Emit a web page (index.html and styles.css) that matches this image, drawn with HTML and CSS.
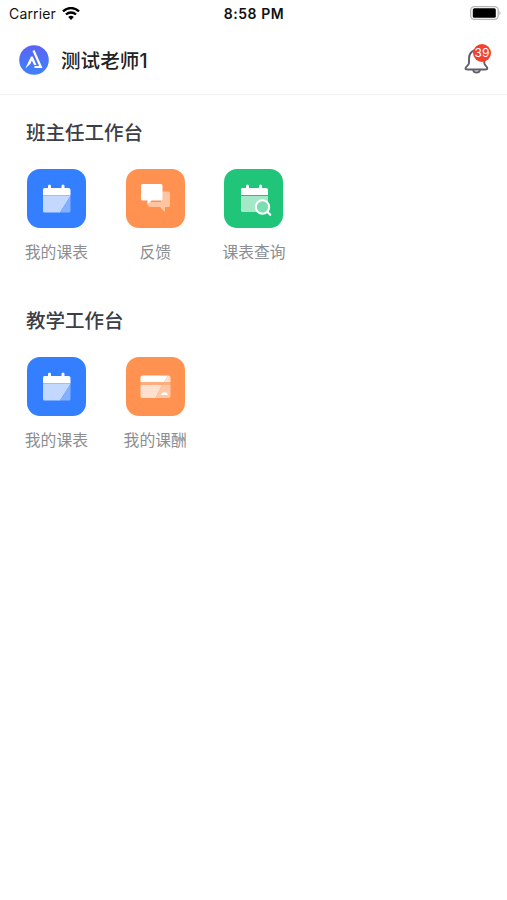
FILE: index.html
```html
<!DOCTYPE html>
<html lang="zh-CN">
<head>
<meta charset="utf-8">
<title>工作台</title>
<link rel="stylesheet" href="styles.css">
</head>
<body>
<svg class="defs" width="0" height="0">
  <symbol id="calendar" viewBox="0 0 59 59">
    <path class="white" d="M17.500 19H21v-2a1.500 1.500 0 0 1 3 0v2h10.500v-2a1.500 1.500 0 0 1 3 0v2h4q2 0 2 2v5.500H16V21q0-2 1.500-2z"/>
    <path class="tint" d="M16 27h27.500L33 43.500H17.500q-1.500 0-1.500-1.500z"/>
    <path class="faint" d="M43.500 27v15q0 1.500-1.500 1.500h-9z"/>
  </symbol>
</svg>
<div class="status">
  <div class="carrier">Carrier
    <svg width="18" height="14" viewBox="0 0 18 14"><g fill="none" stroke="#000" stroke-width="2.400"><path d="M1 4.300a11.500 11.500 0 0 1 16 0"/><path d="M4 7.500a7.200 7.200 0 0 1 10 0"/></g><path d="M6.200 10a4 4 0 0 1 5.600 0L9 13z"/></svg>
  </div>
  <div class="time">8:58 PM</div>
  <svg class="battery" width="32" height="14" viewBox="0 0 32 14"><rect x=".7" y=".7" width="27.500" height="12.600" rx="3.500" fill="#fff" stroke="#b5b5b5" stroke-width="1.300"/><rect x="2.800" y="2.300" width="23" height="9.400" rx="1.500"/><path d="M29.500 4.700q2 2.300 0 4.600z" fill="#aaa"/></svg>
</div>
<header class="header">
  <svg width="30" height="30" viewBox="0 0 30 30"><defs><linearGradient id="brand" x2="0" y2="1"><stop stop-color="#5b63f5"/><stop offset="1" stop-color="#3d83fa"/></linearGradient></defs><circle cx="15" cy="15" r="14.800" fill="url(#brand)"/><path d="M14.500 5.500L21.800 22H15.500" fill="none" stroke="#fff" stroke-width="2.200"/><path class="white" d="M6.300 23.500L12 11.500h1.700L17.500 20h-2.400l-2.300-4.500-1.300 3.200z"/></svg>
  <h1 class="name">测试老师1</h1>
  <div class="bell">
    <svg width="26" height="28" viewBox="0 0 26 28"><g fill="none" stroke="#5c606a" stroke-width="1.900" stroke-linecap="round" stroke-linejoin="round"><path d="M10 3.500C6 5 5 8 5 12v4c0 2.500-3.500 3.500-3.500 5.200 0 1 .8 1.300 2 1.300h17.800c1.200 0 2-.3 2-1.300 0-1.700-3-2.700-3-5.200v-3"/><path d="M9.300 23.300c.5 3 6 3 6.500 0"/></g></svg>
    <span class="badge">39</span>
  </div>
</header>
<main>
  <section class="section">
    <h2 class="title">班主任工作台</h2>
    <div class="apps">
      <div class="app"><svg class="tile blue" viewBox="0 0 59 59"><use href="#calendar"/></svg><span>我的课表</span></div>
      <div class="app"><svg class="tile orange" viewBox="0 0 59 59"><path d="M35 22.500h7q2 0 2 2v12q0 1.500-2 1.500h-3v5l-5-5H24q-2 0-2-1.500l2-3.500h11z" fill="#ffc4a0"/><path class="white" d="M16.500 15H35q1.500 0 1.500 1.500V30q0 1.500-1.500 1.500H25.500L21.500 36v-4.500h-5Q15 31.500 15 30V16.500Q15 15 16.500 15z"/></svg><span>反馈</span></div>
      <div class="app"><svg class="tile green" viewBox="0 0 59 59"><path class="white" d="M18 19h4v-2a1.500 1.500 0 0 1 3 0v2h10v-2a1.500 1.500 0 0 1 3 0v2h4q2 0 2 2v5H17v-5q0-2 1-2z"/><path d="M17 27h27v16H18.500q-1.500 0-1.500-1.500z" fill="#a4e8c7"/><circle cx="38.500" cy="38" r="6.700" fill="#7bddb0" stroke="#fff" stroke-width="2"/><path d="M43.300 42.800l3 3" stroke="#fff" stroke-width="2.200" stroke-linecap="round"/></svg><span>课表查询</span></div>
    </div>
  </section>
  <section class="section">
    <h2 class="title">教学工作台</h2>
    <div class="apps">
      <div class="app"><svg class="tile blue" viewBox="0 0 59 59"><use href="#calendar"/></svg><span>我的课表</span></div>
      <div class="app"><svg class="tile orange" viewBox="0 0 59 59"><path class="white" d="M16.500 18.500H42L38 25H14.500v-4.500q0-2 2-2z"/><path d="M42 18.500q2.500 0 2.500 2V25H38zM14.500 28H36l-6.500 13h-13q-2 0-2-2z" fill="#ffe0ce"/><path d="M36 28h8.500v11q0 2-2 2h-13z" fill="#ffc6a4"/><path d="M14.500 25h30v3h-30z" fill="#ffad7d"/><path class="white" d="M34.500 38l2-2.500h4l1.500 2.500z"/></svg><span>我的课酬</span></div>
    </div>
  </section>
</main>
</body>
</html>
```
FILE: styles.css
```css
* { box-sizing: border-box; }
body {
  margin: 0;
  background: #fff;
  font-family: Inter, "Noto Sans CJK SC", sans-serif;
}
h1, h2 { margin: 0; }
svg { display: block; flex: none; }
.defs { position: absolute; }
.white { fill: #fff; }
.tint { fill: #c2d8ff; }
.faint { fill: #83b0ff; }
.status {
  display: grid;
  grid-template-columns: 1fr auto 1fr;
  align-items: center;
  height: 27px;
  padding: 0 6px 0 9px;
  font-size: 14px;
  color: #111;
}
.carrier { display: flex; align-items: center; gap: 6px; letter-spacing: .15px; }
.time { margin-right: 2px; font-weight: 600; letter-spacing: .55px; }
.battery { justify-self: end; margin: 0 -1px 1px 0; }
.header {
  display: flex;
  align-items: center;
  height: 68px;
  padding: 0 15px 2px 19px;
  border-bottom: 1px solid #f2f2f2;
}
.name {
  flex: 1;
  margin-left: 12px;
  padding-top: 2px;
  font-size: 19.500px;
  font-weight: 500;
  line-height: 28px;
  letter-spacing: .1px;
  color: #222;
}
.bell { position: relative; margin: 3px 2px 0 0; }
.badge {
  position: absolute;
  top: -3px;
  left: 9px;
  width: 18px;
  height: 18px;
  border-radius: 50%;
  background: #f5402f;
  color: #fff;
  font-size: 12px;
  line-height: 18px;
  text-align: center;
}
.section { height: 188px; padding: 24px 0 0 7px; }
.title {
  margin-left: 19px;
  font-size: 19.500px;
  font-weight: 500;
  line-height: 28px;
  color: #3b3e46;
}
.apps { display: flex; margin-top: 22px; }
.app {
  display: flex;
  flex-direction: column;
  align-items: center;
  width: 98.800px;
  font-size: 15.800px;
  line-height: 24px;
  color: #8c8e92;
}
.tile { width: 59px; height: 59px; margin-bottom: 13px; border-radius: 13px; }
.blue { background: #337fff; }
.orange { background: #ff9250; }
.green { background: #21c57a; }
```
